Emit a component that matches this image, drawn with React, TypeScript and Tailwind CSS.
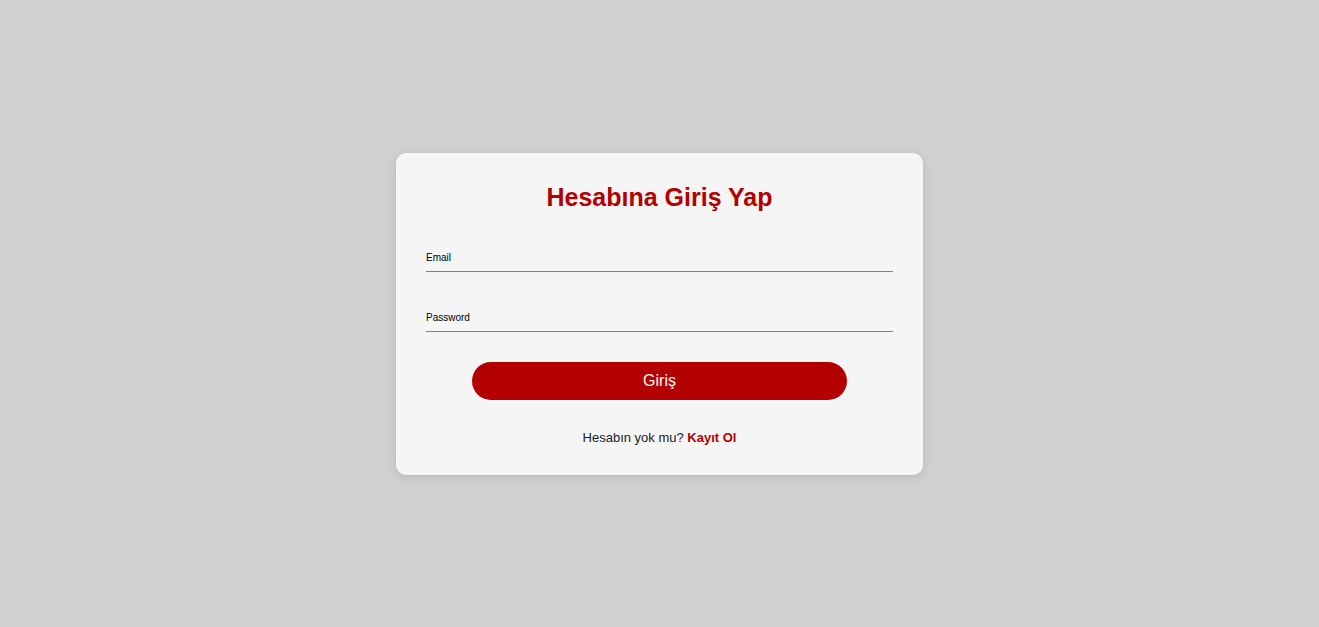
export default function App() {
  return (
    <div className="flex min-h-screen items-center justify-center bg-[#d0d0d0] font-['Liberation_Sans',Arial,sans-serif]">
      <div className="w-[527px] rounded-[10px] bg-[#f5f5f5] px-[30px] pb-[28px] pt-[30px] shadow-[0_2px_10px_rgba(0,0,0,0.12)]">
        <h1 className="text-center text-[25px] font-bold leading-[29px] text-[#b30000]">
          Hesabına Giriş Yap
        </h1>

        <div className="mt-[29px] flex h-[31px] items-end border-b border-[#808080]">
          <label className="mb-[7px] text-[10px] leading-[12px] text-black">Email</label>
        </div>
        <div className="mt-[29px] flex h-[31px] items-end border-b border-[#808080]">
          <label className="mb-[7px] text-[10px] leading-[12px] text-black">Password</label>
        </div>

        <div className="mt-[30px] flex justify-center">
          <button className="h-[38px] w-[375px] rounded-full bg-[#b30000] text-[16px] text-white">
            Giriş
          </button>
        </div>

        <p className="mt-[29px] text-center text-[13px] leading-[18px] text-[#1a1a1a]">
          Hesabın yok mu? <a className="font-bold text-[#b30000]">Kayıt Ol</a>
        </p>
      </div>
    </div>
  )
}
